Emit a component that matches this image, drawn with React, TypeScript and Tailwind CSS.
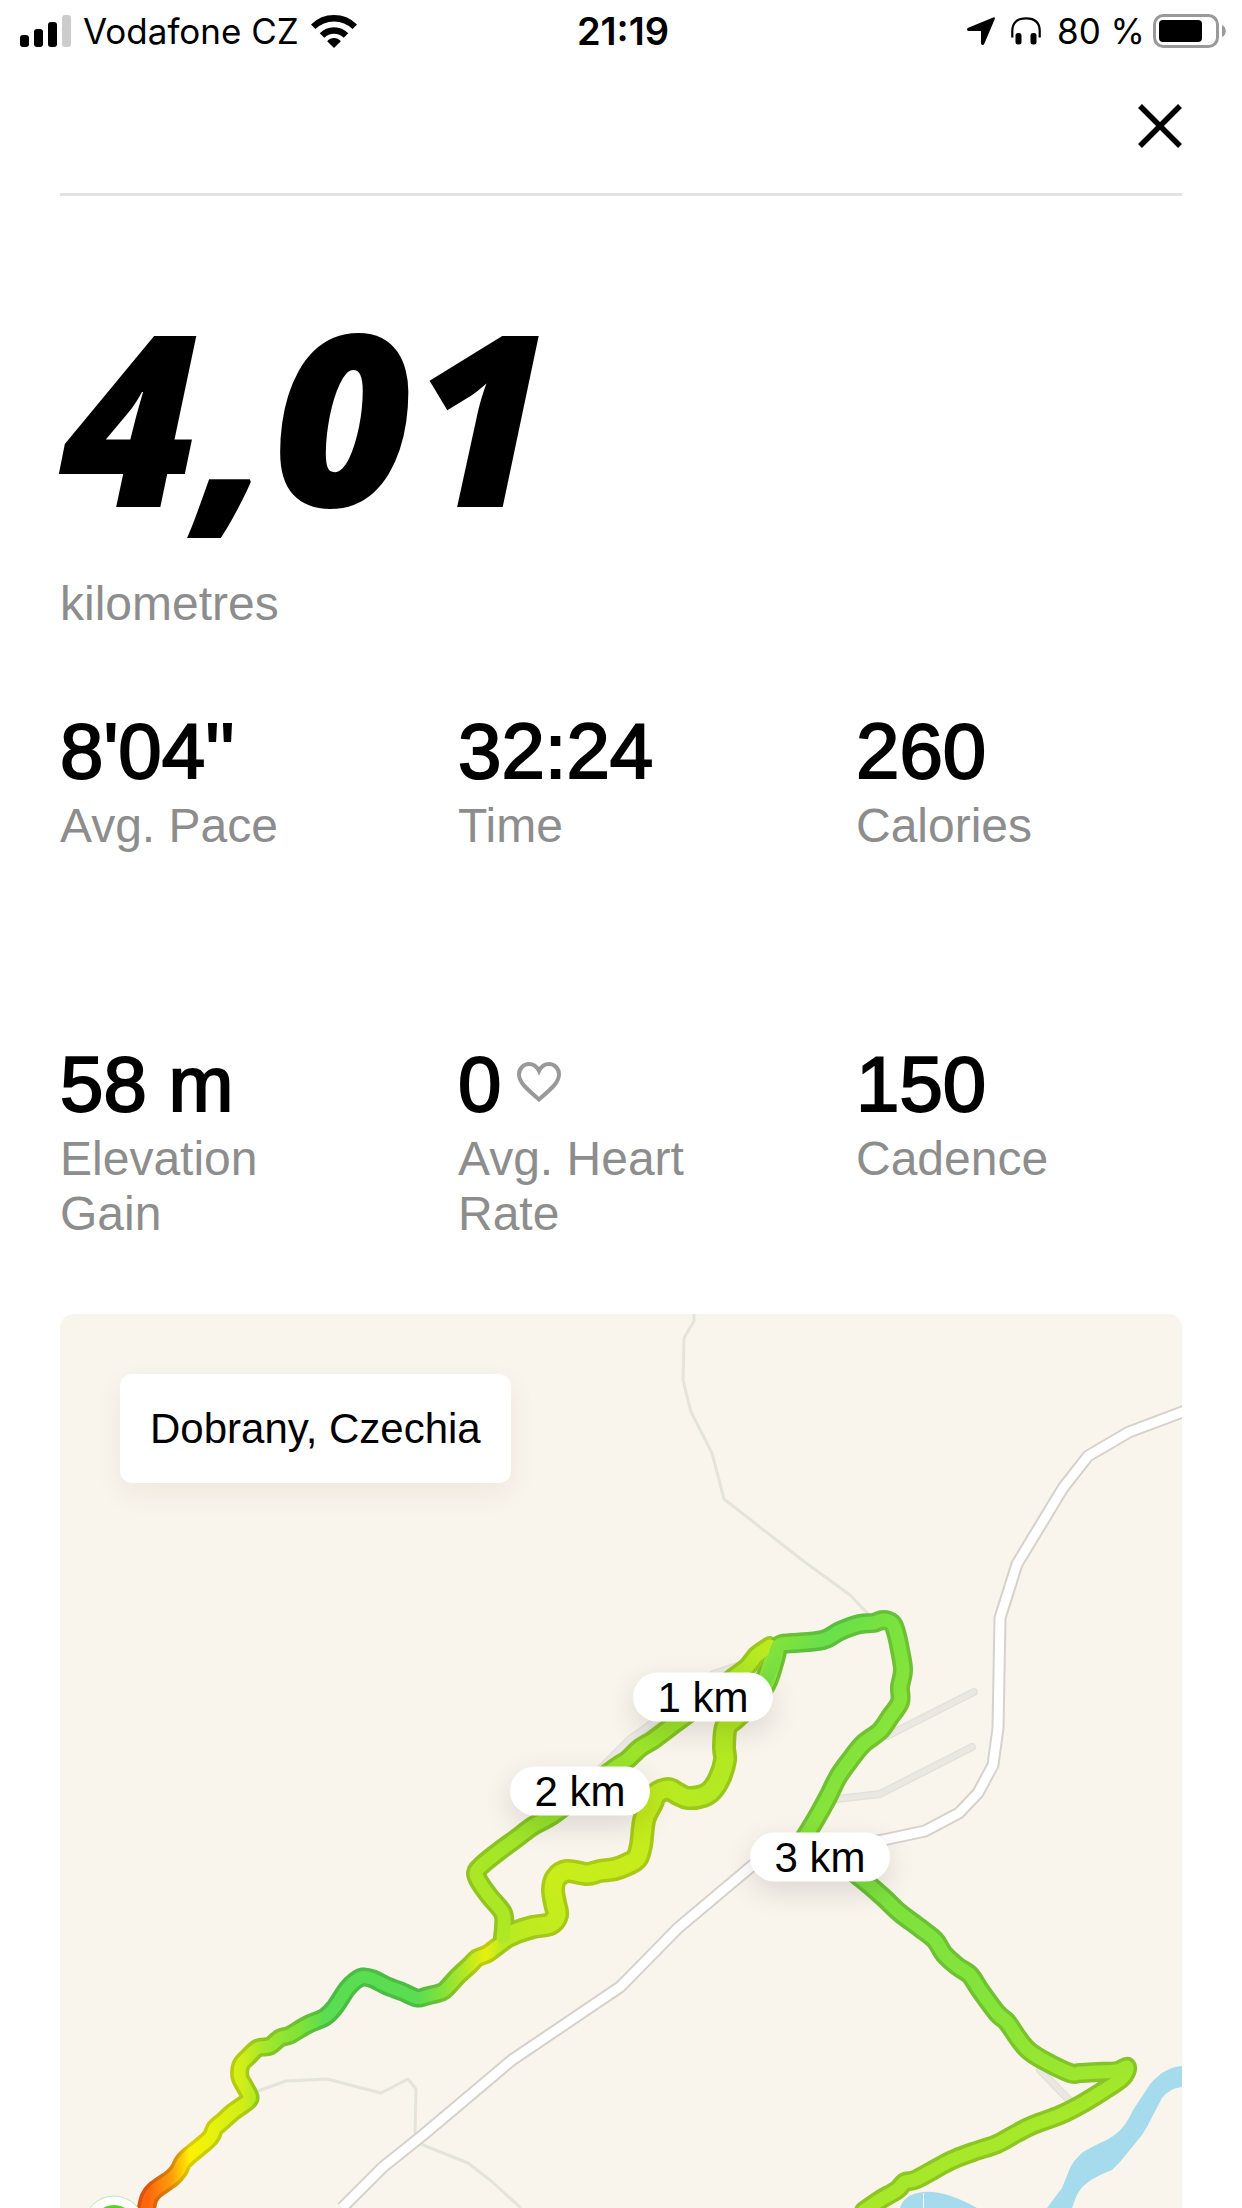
import React from 'react';

const stats = [
  { value: "8'04''", label: 'Avg. Pace' },
  { value: '32:24', label: 'Time' },
  { value: '260', label: 'Calories' },
  { value: '58 m', label: 'Elevation Gain' },
  { value: '0', label: 'Avg. Heart Rate', heart: true },
  { value: '150', label: 'Cadence' },
];

const MAP_W = 1122;
const MAP_H = 894;

const markers = [
  { label: '1 km', x: 643, y: 383 },
  { label: '2 km', x: 520, y: 477 },
  { label: '3 km', x: 760, y: 543 },
];

const roads = [
  '282,894 323,853 363,821 452,746 560,673 567,666 618,614 693,551 760,537 823,526 865,517 899,499 918,479 933,451 938,414 940,304 957,250 1003,174 1028,142 1069,118 1125,97',
];

const lanes = [
  '914,378 827,422',
  '912,433 820,480 777,485',
  '980,756 1012,789',
  '540,455 570,425 597,406 653,360 680,351',
];

const tracks = [
  '634,0 634,7 624,24 623,66 631,98 652,139 664,185 742,246 790,281 808,300',
  '198,777 226,767 267,765 321,779 348,765 356,775 355,818 358,829 408,849 430,866 461,894',
];

// the run, split where the colour changes direction
const segments = [
  {
    id: 'pace-start',
    width: 19,
    from: [87, 0],
    to: [443, 0],
    stops: [
      [0, '#ff640e'],
      [0.07, '#ff9f0c'],
      [0.12, '#fff000'],
      [0.18, '#e8f20c'],
      [0.27, '#cfee18'],
      [0.32, '#a8e828'],
      [0.44, '#7ae23c'],
      [0.5, '#5add50'],
      [0.76, '#5add50'],
      [0.83, '#84e23a'],
      [0.89, '#b0e826'],
      [0.95, '#e6f00e'],
      [1, '#b8ea22'],
    ],
    points:
      '86,897 89,884 95,876 112,864 119,856 123,848 130,841 147,827 152,821 155,814 163,807 173,798 187,788 190,783 185,773 180,763 181,751 188,743 198,734 210,732 220,724 230,721 247,711 265,703 275,693 287,675 295,667 303,663 313,665 327,672 343,678 357,684 367,682 382,678 388,673 398,662 410,651 417,644 427,640 434,635 446,626',
  },
  {
    id: 'pace-lower',
    width: 24,
    from: [443, 624],
    to: [717, 331],
    stops: [
      [0, '#baea22'],
      [0.2, '#c8ee1a'],
      [0.45, '#c4ec1c'],
      [0.6, '#b4ea22'],
      [0.82, '#b0e824'],
      [0.93, '#8ee436'],
      [1, '#84e23a'],
    ],
    points:
      '446,623 457,618 473,613 490,610 497,601 495,589 493,576 496,564 507,557 527,560 540,557 555,555 568,550 577,544 581,531 583,513 585,503 592,489 596,480 608,475 618,480 628,484 643,482 652,476 660,463 665,446 664,433 666,413 675,404 690,390 705,369 712,349 715,337',
  },
  {
    id: 'pace-upper',
    width: 20,
    from: [416, 600],
    to: [708, 331],
    stops: [
      [0, '#b0e824'],
      [0.3, '#98e42c'],
      [0.7, '#9ce42a'],
      [0.85, '#a6e628'],
      [1, '#bcea20'],
    ],
    points:
      '443,623 444,613 443,599 430,583 420,569 416,559 422,551 438,538 457,524 473,512 493,501 520,480 556,453 567,446 580,434 593,426 613,411 640,391 670,366 687,353 697,341 710,332',
  },
  {
    id: 'pace-loop',
    width: 20,
    from: [713, 330],
    to: [840, 420],
    stops: [
      [0, '#84e23a'],
      [0.25, '#68e04a'],
      [0.5, '#78e240'],
      [1, '#8ae438'],
    ],
    points:
      '705,369 713,349 717,334 722,330 733,329 763,326 780,317 800,310 813,309 823,306 832,309 836,318 840,336 843,356 840,373 840,388 830,403 820,417 803,430 790,446 778,463 768,483 757,503 748,518 738,534',
  },
  {
    id: 'pace-end',
    width: 20,
    from: [780, 540],
    to: [900, 894],
    stops: [
      [0, '#7ae040'],
      [0.5, '#84e43a'],
      [0.72, '#98e630'],
      [0.85, '#a6e82a'],
      [1, '#a8e828'],
    ],
    points:
      '770,540 802,565 823,583 840,599 860,614 875,626 884,640 897,652 910,661 920,676 937,699 947,708 958,724 968,736 983,746 1010,759 1020,759 1037,758 1057,757 1067,753 1062,764 1043,777 1020,791 1000,801 973,811 957,819 937,830 913,838 890,847 857,865 845,868 837,876 820,886 804,897',
  },
];

// rounds the corners of a list of GPS points
const smooth = (points: string) => {
  const p = points.split(' ').map((pair) => pair.split(',').map(Number));
  let d = `M${p[0]}`;
  for (let i = 0; i < p.length - 1; i++) {
    const a = p[i - 1] ?? p[i];
    const b = p[i];
    const c = p[i + 1];
    const e = p[i + 2] ?? c;
    d += `C${b[0] + (c[0] - a[0]) / 6},${b[1] + (c[1] - a[1]) / 6} ${c[0] - (e[0] - b[0]) / 6},${c[1] - (e[1] - b[1]) / 6} ${c}`;
  }
  return d;
};

const StatusBar = () => (
  <div className="grid h-16 grid-cols-3 items-center pb-0.5 pl-5 pr-4 font-['Inter',sans-serif] text-[35px]">
    <div className="flex items-center gap-3 whitespace-nowrap">
      <svg className="h-8 w-[51px]" viewBox="0 0 51 32" aria-hidden="true">
        <rect x="0" y="20" width="9" height="12" rx="3" />
        <rect x="14" y="14" width="9" height="18" rx="3" />
        <rect x="28" y="7" width="9" height="25" rx="3" />
        <rect x="42" y="0" width="9" height="32" rx="3" fill="#ccc" />
      </svg>
      <span>Vodafone CZ</span>
      <svg className="h-[33px] w-[46px]" viewBox="0 0 46 33" aria-hidden="true">
        <g fill="none" stroke="#000" strokeWidth="6.4">
          <path d="M2.2 11.8C13.8 0.4 32.2 0.4 43.8 11.8" />
          <path d="M11 20.6C17.6 13.8 28.4 13.8 35 20.6" />
        </g>
        <path d="M23 33l-6.8-6.8c3.8-4.2 9.8-4.2 13.6 0z" />
      </svg>
    </div>
    <span className="text-center text-[38px] font-semibold">21:19</span>
    <div className="flex items-center justify-end gap-2 whitespace-nowrap">
      <svg className="mr-2 h-7 w-7" viewBox="0 0 28 28" aria-hidden="true">
        <path d="M26.2 0.4L1.3 10.8c-1.9 0.8-1.5 3.2 0.5 3.2h11.6c0.3 0 0.6 0.2 0.6 0.6v11.5c0 2.2 2.5 2.5 3.3 0.6L27.8 2c0.5-1.2-0.5-2.1-1.6-1.6z" />
      </svg>
      <svg className="mr-2 h-7 w-[30px]" viewBox="0 0 30 28" aria-hidden="true">
        <path d="M1.3 20.5V14C1.3 5.5 6.5 1.3 15 1.3S28.7 5.5 28.7 14v6.5" fill="none" stroke="#000" strokeWidth="2.2" />
        <rect x="4.5" y="16" width="6" height="11.5" rx="2.5" />
        <rect x="19.5" y="16" width="6" height="11.5" rx="2.5" />
      </svg>
      <span>80 %</span>
      <svg className="h-[34px] w-[73px]" viewBox="0 0 73 34" aria-hidden="true">
        <rect x="1.5" y="1.5" width="63" height="31" rx="9" fill="none" stroke="#999" strokeWidth="3" />
        <rect x="6" y="6" width="43" height="22" rx="4" />
        <path d="M69 11c5 2 5 10 0 12z" fill="#999" />
      </svg>
    </div>
  </div>
);

const Heart = () => (
  <svg className="mb-1 h-10 w-11" viewBox="0 0 44 40" fill="none" stroke="#999" strokeWidth="4" aria-hidden="true">
    <path d="M22 37.5C10 27 2 20.5 2 12.5 2 6.5 6.5 2 12 2c4.5 0 8 2.8 10 7 2-4.2 5.5-7 10-7 5.5 0 10 4.5 10 10.5 0 8-8 14.5-20 25z" />
  </svg>
);

const RouteMap = () => (
  <section aria-label="Route" className="relative overflow-hidden rounded-t-[14px] bg-[#f9f4ec]">
    <svg className="block h-auto w-full" viewBox={`0 0 ${MAP_W} ${MAP_H}`} fill="none" strokeLinejoin="round" aria-hidden="true">
      <defs>
        {segments.map((s) => (
          <linearGradient
            key={s.id}
            id={s.id}
            gradientUnits="userSpaceOnUse"
            x1={s.from[0]}
            y1={s.from[1]}
            x2={s.to[0]}
            y2={s.to[1]}
          >
            {s.stops.map(([offset, color]) => (
              <stop key={offset} offset={offset} stopColor={String(color)} />
            ))}
          </linearGradient>
        ))}
      </defs>

      {/* river and pond */}
      <path
        fill="#a6dbed"
        d="M1122 752Q1108 753 1097 763Q1090 769 1085 778L1073 796Q1066 812 1057 819Q1050 825 1040 829Q1028 835 1023 838Q1013 847 1010 854L1002 874L987 894H1012L1016 883Q1020 874 1027 869Q1036 862 1052 856L1060 848L1082 821Q1088 812 1092 803L1102 784Q1110 774 1122 773Z"
      />
      <path fill="#a6dbed" d="M840 894Q844 880 863 878Q885 876 917 894Z" />
      <path stroke="#fff" d="M863.5 879V894" />

      {tracks.map((p) => (
        <polyline key={p} points={p} stroke="#e4e4d8" strokeWidth="3" />
      ))}
      {lanes.map((p) => (
        <g key={p} strokeLinecap="round">
          <polyline points={p} stroke="#e4e1d8" strokeWidth="8" />
          <polyline points={p} stroke="#ebe8e3" strokeWidth="5" />
        </g>
      ))}
      {roads.map((p) => (
        <g key={p}>
          <polyline points={p} stroke="#d6d2cb" strokeWidth="13" />
          <polyline points={p} stroke="#fff" strokeWidth="9" />
        </g>
      ))}

      {/* casing first, so that joining segments blend */}
      {segments.map((s) => (
        <g key={s.id} strokeLinecap="round">
          <path d={smooth(s.points)} stroke={`url(#${s.id})`} strokeWidth={s.width} />
          <path d={smooth(s.points)} stroke="#000" strokeOpacity="0.15" strokeWidth={s.width} />
        </g>
      ))}
      {segments.map((s) => (
        <path key={s.id} d={smooth(s.points)} stroke={`url(#${s.id})`} strokeWidth={s.width - 7} strokeLinecap="round" />
      ))}

      <circle cx="54" cy="912" r="30" fill="#fff" stroke="#bfeab0" />
      <circle cx="54" cy="912" r="21" fill="#57d31f" />
    </svg>

    <div className="absolute left-[60px] top-[60px] rounded-xl bg-white px-[30px] py-[30px] text-[42px] leading-[49px] shadow-[0_10px_30px_rgba(60,40,0,0.06)]">
      Dobrany, Czechia
    </div>
    {markers.map((m) => (
      <span
        key={m.label}
        className="absolute flex h-[49px] w-[140px] -translate-x-1/2 -translate-y-1/2 items-center justify-center rounded-full bg-white text-[42px] shadow-[0_10px_30px_rgba(0,0,0,0.12)]"
        style={{ left: `${(m.x / MAP_W) * 100}%`, top: `${(m.y / MAP_H) * 100}%` }}
      >
        {m.label}
      </span>
    ))}
  </section>
);

const App = () => {
  return (
    <div className="bg-white font-['Liberation_Sans',Arial,sans-serif] text-black">
      <StatusBar />
      <main className="px-[60px]">
        <header className="flex h-[132px] items-center justify-end border-b-[3px] border-[#e3e3e3] pb-1.5">
          <button type="button" aria-label="Close">
            <svg className="h-11 w-11" viewBox="0 0 44 44" stroke="#000" strokeWidth="5.5" aria-hidden="true">
              <path d="M2 2l40 40M42 2L2 42" />
            </svg>
          </button>
        </header>

        <h1 className="pb-6 pt-20 font-['Open_Sans',sans-serif] text-[240px] font-extrabold italic leading-[276px]">4,01</h1>
        <p className="text-5xl leading-[56px] text-[#8d8d8d]">kilometres</p>

        <dl className="mt-20 grid grid-cols-3 gap-x-[72px] gap-y-[192px]">
          {stats.map((stat) => (
            <div key={stat.label} className="flex flex-col-reverse justify-end gap-2">
              <dt className="pr-16 text-5xl leading-[55px] text-[#8d8d8d]">{stat.label}</dt>
              <dd className="flex items-center gap-4 text-[78px] leading-[78px] [-webkit-text-stroke:2px_black]">
                {stat.value}
                {stat.heart && <Heart />}
              </dd>
            </div>
          ))}
        </dl>

        <div className="mt-[73px]">
          <RouteMap />
        </div>
      </main>
    </div>
  );
};

export default App;
